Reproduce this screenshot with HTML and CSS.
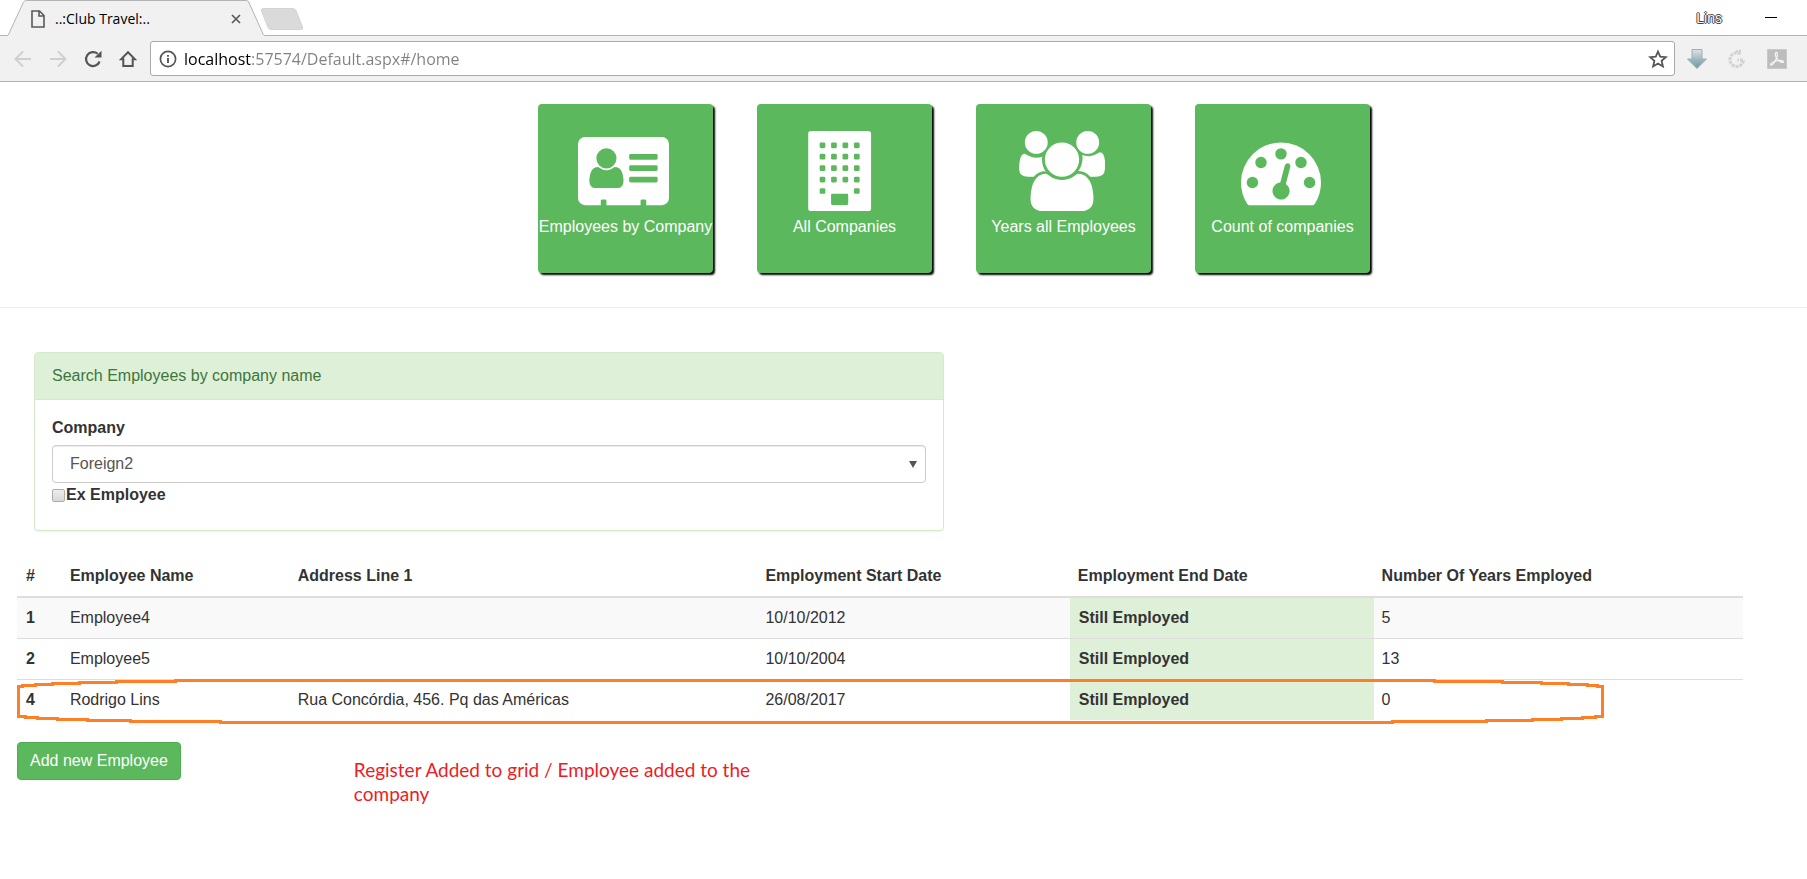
FILE: index.html
```html
<!DOCTYPE html>
<html lang="en">
<head>
<meta charset="utf-8">
<title>..:Club Travel:..</title>
<link rel="stylesheet" href="styles.css">
</head>
<body>
<header class="browser">
  <div class="tabstrip">
    <div class="tab">
      <svg class="tab-shape" viewBox="0 0 260 37" aria-hidden="true"><path class="tab-fill" d="M2 37V35.500L18 2Q18.500.500 20.500.500H240Q242 .500 243 2L258 35.500V37z"/><path class="tab-line" d="M0 35.500H1Q2 35.500 2.500 34.500L17.500 2Q18.500.500 20.500.500H240Q242 .500 242.700 2L257.300 34.500Q257.800 35.500 259 35.500H260"/></svg>
      <svg class="tab-page" viewBox="0 0 14 18" aria-hidden="true"><path d="M1 1H8.500L13 5.500V17H1zM8 1V6H13" fill="none" stroke="#5a5a5a" stroke-width="1.600"/></svg>
      <span class="tab-title">..:Club Travel:..</span>
      <button class="tab-close" aria-label="Close tab"><svg width="10" height="10" viewBox="0 0 10 10"><path d="M1 1L9 9M9 1L1 9" stroke="#5a5a5a" stroke-width="1.700"/></svg></button>
    </div>
    <button class="new-tab" aria-label="New tab"><svg width="44" height="22" viewBox="0 0 44 22"><path d="M3 .500H33Q35 .500 36 2.500L42.500 19Q43 21.500 41 21.500H11Q9 21.500 8 19.500L1.500 3Q1 .500 3 .500z" fill="#dadada" stroke="#d4d4d4"/></svg></button>
    <span class="user">Lins</span>
    <button class="minimise" aria-label="Minimise"><svg width="12" height="2" viewBox="0 0 12 2"><path d="M0 .500H12" stroke="#000"/></svg></button>
  </div>
  <div class="toolbar">
    <button aria-label="Back"><svg width="18" height="18" viewBox="0 0 18 18"><path d="M17 9H2M9 1.500L1.500 9L9 16.500" fill="none" stroke="#cfcfcf" stroke-width="1.900"/></svg></button>
    <button aria-label="Forward"><svg width="18" height="18" viewBox="0 0 18 18"><path d="M1 9H16M9 1.500L16.500 9L9 16.500" fill="none" stroke="#cfcfcf" stroke-width="1.900"/></svg></button>
    <button aria-label="Reload"><svg width="18" height="18" viewBox="0 0 18 18"><path d="M15.600 11.500A7 7 0 1 1 13.700 3.800" fill="none" stroke="#555" stroke-width="2.200"/><path d="M17.500 .800V7.500H10.500z" fill="#555"/></svg></button>
    <button aria-label="Home"><svg width="18" height="18" viewBox="0 0 18 18"><path d="M9 2.200L2 9.300H4.300V16H13.700V9.300H16z" fill="none" stroke="#555" stroke-width="2"/></svg></button>
    <div class="omnibox">
      <svg width="18" height="18" viewBox="0 0 18 18" aria-hidden="true"><circle cx="9" cy="9" r="7.600" fill="none" stroke="#555" stroke-width="1.700"/><path d="M9 8V13M9 5V6.800" stroke="#555" stroke-width="1.900"/></svg>
      <input class="url" type="text" aria-label="Address" value="localhost:57574/Default.aspx#/home">
      <button aria-label="Bookmark"><svg width="20" height="20" viewBox="0 0 20 20"><path d="M10 2.500L12.200 7.700L17.800 8.200L13.600 11.900L14.900 17.400L10 14.500L5.100 17.400L6.400 11.900L2.200 8.200L7.800 7.700z" fill="none" stroke="#555" stroke-width="1.800"/></svg></button>
    </div>
    <button class="ext" aria-label="Downloads"><svg width="20" height="20" viewBox="0 0 20 20"><defs><linearGradient id="dl" x2="0" y2="1"><stop offset="0" stop-color="#dfe3e5"/><stop offset=".6" stop-color="#93b2b9"/><stop offset="1" stop-color="#6f9ba4"/></linearGradient></defs><path d="M5 .500H15V10H19.500L10 19.500L.500 10H5z" fill="url(#dl)" stroke="#a1adb2"/></svg></button>
    <button class="ext" aria-label="Extension"><svg width="20" height="20" viewBox="0 0 20 20"><path d="M13.500 5A6.800 6.800 0 1 0 16.500 11H10.500" fill="none" stroke="#d2d2d2" stroke-width="3" stroke-dasharray="3 1"/><path d="M9 2.500L14 1.500" stroke="#cacaca" stroke-width="2" stroke-dasharray="2 1"/></svg></button>
    <button class="ext" aria-label="PDF"><svg width="20" height="20" viewBox="0 0 20 20"><path d="M.500.500H19.500V19.500H.500z" fill="#bdbdbd" stroke="#c9c9c9"/><path d="M9 3.500C11 3 10.500 7 9.300 9.500C7.500 13.500 5 16.500 3.700 16C2.800 14.500 7 12.200 10.500 11.600C14 11 16.800 11.800 16.500 13C15.500 14.300 11 12 9.500 9C8.300 6.500 8 4 9 3.500z" fill="none" stroke="#f4f4f4" stroke-width="1.300"/></svg></button>
  </div>
</header>

<nav class="cards">
  <a class="card" href="#by-company">
    <svg class="icon icon-card" viewBox="0 0 2048 1792" aria-hidden="true"><path fill-rule="evenodd" d="M160 128H1888q66 0 113 47t47 113V1504q0 66-47 113t-113 47H1536V1568q0-14-9-23t-23-9h-64q-14 0-23 9t-9 23v96H640V1568q0-14-9-23t-23-9h-64q-14 0-23 9t-9 23v96H160q-66 0-113-47T0 1504V288q0-66 47-113t113-47zM1024 1131q0-64-9-117.500t-29.500-103-60.500-78-97-28.500q-6 4-30 18t-37.500 21.500-35.500 17.500-43 14.500-42 4.500-42-4.500-43-14.500-35.500-17.500-37.500-21.500-30-18q-57 0-97 28.500t-60.500 78-29.500 103-9 117.500 37 106.500 91 42.500h512q54 0 91-42.500t37-106.500zM867 611q0-94-66.500-160.500t-160.500-66.500-160.500 66.500-66.500 160.500 66.500 160.500 160.500 66.500 160.500-66.500 66.500-160.500zM1184 512h576q32 0 32 32v64q0 32-32 32h-576q-32 0-32-32v-64q0-32 32-32zM1184 768h576q32 0 32 32v64q0 32-32 32h-576q-32 0-32-32v-64q0-32 32-32zM1184 1024h576q32 0 32 32v64q0 32-32 32h-576q-32 0-32-32v-64q0-32 32-32z"/></svg>
    <span>Employees by Company</span>
  </a>
  <a class="card" href="#companies">
    <svg class="icon icon-building" viewBox="0 0 1536 1792" aria-hidden="true"><rect width="1408" height="1792" rx="64"/><g class="cut"><rect x="256" y="256" width="128" height="128" rx="30"/><rect x="512" y="256" width="128" height="128" rx="30"/><rect x="768" y="256" width="128" height="128" rx="30"/><rect x="1024" y="256" width="128" height="128" rx="30"/><rect x="256" y="512" width="128" height="128" rx="30"/><rect x="512" y="512" width="128" height="128" rx="30"/><rect x="768" y="512" width="128" height="128" rx="30"/><rect x="1024" y="512" width="128" height="128" rx="30"/><rect x="256" y="768" width="128" height="128" rx="30"/><rect x="512" y="768" width="128" height="128" rx="30"/><rect x="768" y="768" width="128" height="128" rx="30"/><rect x="1024" y="768" width="128" height="128" rx="30"/><rect x="256" y="1024" width="128" height="128" rx="30"/><rect x="512" y="1024" width="128" height="128" rx="30"/><rect x="768" y="1024" width="128" height="128" rx="30"/><rect x="1024" y="1024" width="128" height="128" rx="30"/><rect x="256" y="1280" width="128" height="128" rx="30"/><rect x="1024" y="1280" width="128" height="128" rx="30"/><rect x="512" y="1408" width="384" height="248" rx="24"/></g></svg>
    <span>All Companies</span>
  </a>
  <a class="card" href="#years">
    <svg class="icon icon-users" viewBox="0 0 1920 1792" aria-hidden="true"><path d="M593 896q-162 5-265 128h-134q-82 0-138-40.500t-56-118.500q0-353 124-353 6 0 43.500 21t97.500 42.500 119 21.500q67 0 133-23-5 37-5 66 0 159 93 290zm1071 637q0 120-73 189.500t-194 69.500h-874q-121 0-194-69.500t-73-189.500q0-53 3.500-103.500t14-109 26.500-108.500 43-97.500 62-81 85.500-53.500 111.500-20q10 0 43 21.500t73 48 107 48 135 21.500 135-21.500 107-48 73-48 43-21.500q61 0 111.500 20t85.500 53.500 62 81 43 97.500 26.500 108.500 14 109 3.500 103.500zm-1024-1277q0 106-75 181t-181 75-181-75-75-181 75-181 181-75 181 75 75 181zm704 384q0 159-112.500 271.500t-271.500 112.500-271.500-112.500-112.500-271.500 112.500-271.500 271.500-112.500 271.500 112.500 112.500 271.500zm576 225q0 78-56 118.500t-138 40.500h-134q-103-123-265-128 93-131 93-290 0-29-5-66 66 23 133 23 59 0 119-21.500t97.500-42.500 43.500-21q124 0 124 353zm-128-609q0 106-75 181t-181 75-181-75-75-181 75-181 181-75 181 75 75 181z"/></svg>
    <span>Years all Employees</span>
  </a>
  <a class="card" href="#count">
    <svg class="icon icon-gauge" viewBox="0 0 1792 1792" aria-hidden="true"><path d="M1792 1152q0 261-141 483-19 29-54 29h-1402q-35 0-54-29-141-221-141-483 0-182 71-348t191-286 286-191 348-71 348 71 286 191 191 286 71 348z"/><g class="cut"><circle cx="256" cy="1152" r="128"/><circle cx="448" cy="704" r="128"/><circle cx="896" cy="512" r="128"/><circle cx="1344" cy="704" r="128"/><circle cx="1536" cy="1152" r="128"/><path d="M1004 1185l101-382q6-26-7.500-48.500t-38.500-29.500-48 6.500-30 39.500l-101 382q-60 5-107 43.500t-63 98.500q-20 77 20 146t117 89 146-20 89-117q16-60-6-117t-72-91z"/></g></svg>
    <span>Count of companies</span>
  </a>
</nav>

<main class="content">
  <section class="panel">
    <h2 class="panel-heading">Search Employees by company name</h2>
    <div class="panel-body">
      <label class="field-label" for="company">Company</label>
      <div class="select-wrap">
        <select id="company"><option>Foreign2</option></select>
      </div>
      <div class="check"><input type="checkbox" id="ex"><label for="ex">Ex Employee</label></div>
    </div>
  </section>

  <div class="grid-wrap">
    <table class="grid">
      <colgroup><col class="c-id"><col class="c-name"><col class="c-address"><col class="c-start"><col class="c-end"><col class="c-years"></colgroup>
      <thead>
        <tr><th>#</th><th>Employee Name</th><th>Address Line 1</th><th>Employment Start Date</th><th>Employment End Date</th><th>Number Of Years Employed</th></tr>
      </thead>
      <tbody>
        <tr><th>1</th><td>Employee4</td><td></td><td>10/10/2012</td><td class="status">Still Employed</td><td>5</td></tr>
        <tr><th>2</th><td>Employee5</td><td></td><td>10/10/2004</td><td class="status">Still Employed</td><td>13</td></tr>
        <tr><th>4</th><td>Rodrigo Lins</td><td>Rua Concórdia, 456. Pq das Américas</td><td>26/08/2017</td><td class="status">Still Employed</td><td>0</td></tr>
      </tbody>
    </table>
    <svg class="highlight" viewBox="0 0 1588 45" preserveAspectRatio="none" aria-hidden="true"><path d="M2.500 7.500H7V6.500H20V5.500H37V4.500H64V3.500H101V2.500H160V1.500H1419V2.500H1487V3.500H1526V4.500H1553V5.500H1572V6.500H1582V7.500H1586.500V37.500H1580V38.500H1567V39.500H1546V40.500H1517V41.500H1471V42.500H1377V43.500H205V42.500H115V41.500H72V40.500H42V39.500H22V38.500H10V37.500H2.500z"/></svg>
  </div>

  <div class="actions">
    <button class="btn">Add new Employee</button>
    <p class="note">Register Added to grid / Employee added to the company</p>
  </div>
</main>
</body>
</html>
```
FILE: styles.css
```css
* { box-sizing: border-box; }

body {
  margin: 0;
  background: #fff;
  color: #333;
  font-family: "Liberation Sans", Arial, sans-serif;
  font-size: 16px;
  line-height: 24px;
}

svg { display: block; flex: none; }

button {
  padding: 0;
  border: 0;
  background: none;
  font: inherit;
  cursor: pointer;
}

/* Browser frame */
.browser { font-family: "Open Sans", "Noto Sans", sans-serif; }

.tabstrip {
  display: flex;
  align-items: center;
  height: 36px;
  padding: 0 30px 0 6px;
  border-bottom: 1px solid #b3b3b3;
}

.tab {
  position: relative;
  display: flex;
  align-items: center;
  width: 260px;
  height: 36px;
  padding: 2px 20px 0 25px;
}

.tab-shape {
  position: absolute;
  left: 0;
  top: 0;
  width: 260px;
  height: 37px;
}
.tab-fill { fill: #f1f1f1; }
.tab-line { fill: none; stroke: #b3b3b3; }

.tab-page { position: relative; width: 14px; height: 18px; }

.tab-title {
  position: relative;
  flex: 1;
  margin-left: 10px;
  color: #000;
  font-size: 14px;
  line-height: 20px;
}

.tab-close { position: relative; margin-right: 5px; }
.new-tab { margin: 3px auto 0 -6px; }

.user {
  margin-right: 43px;
  color: #fff;
  font-family: "Liberation Sans", Arial, sans-serif;
  font-size: 14px;
  line-height: 18px;
  text-shadow: 1px 0 0 #444, -1px 0 0 #444, 0 1px 0 #444, 0 -1px 0 #444;
}

.toolbar {
  display: flex;
  align-items: center;
  gap: 17px;
  height: 46px;
  padding: 0 20px 0 14px;
  background: #f1f1f1;
  border-bottom: 1px solid #b3b3b3;
}

.omnibox {
  display: flex;
  flex: 1;
  align-items: center;
  height: 35px;
  margin: 0 -5px 0 -4px;
  padding: 0 6px 0 8px;
  background: #fff;
  border: 1px solid #a9a9a9;
  border-radius: 3px;
}

.url {
  flex: 1;
  min-width: 0;
  margin-left: 7px;
  padding: 0;
  border: 0;
  outline: 0;
  color: #000;
  background: linear-gradient(90deg, #000 67px, #808080 67px);
  background-clip: text;
  -webkit-background-clip: text;
  -webkit-text-fill-color: transparent;
  font-family: inherit;
  font-size: 16px;
  line-height: 24px;
}

.ext + .ext { margin-left: 3px; }

/* Navigation cards */
.cards {
  display: flex;
  flex-wrap: wrap;
  justify-content: center;
  gap: 44px;
  padding: 22px 0 34px 101px;
  border-bottom: 1px solid #eee;
}

.card {
  display: flex;
  flex-direction: column;
  align-items: center;
  width: 175px;
  height: 169px;
  padding-top: 27px;
  border-radius: 4px;
  background: #5cb85c;
  box-shadow: 2px 2px 2px #000;
  color: #fff;
  text-decoration: none;
  white-space: nowrap;
}

.card span { margin-top: 4px; }

.icon { height: 80px; margin-right: 4px; fill: #fff; }
.icon .cut { fill: #5cb85c; }
.icon-card { width: 91px; }
.icon-building { width: 69px; }
.icon-users { width: 86px; }
.icon-gauge { width: 80px; }

/* Search panel */
.content { padding: 44px 64px 40px 17px; }

.panel {
  width: 52.7%;
  margin: 0 0 25px 17px;
  border: 1px solid #d6e9c6;
  border-radius: 4px;
  box-shadow: 0 1px 1px rgba(0, 0, 0, .05);
}

.panel-heading {
  margin: 0;
  padding: 11px 17px;
  border-bottom: 1px solid #d6e9c6;
  border-radius: 3px 3px 0 0;
  background: #dff0d8;
  color: #3c763d;
  font-size: 16px;
  font-weight: 400;
}

.panel-body { padding: 16px 17px 23px; }

.field-label {
  display: block;
  margin-bottom: 5px;
  font-weight: 700;
}

.select-wrap { position: relative; }

.select-wrap::after {
  content: "";
  position: absolute;
  right: 9px;
  top: 16px;
  border: 4px solid transparent;
  border-top: 7px solid #555;
  border-bottom: 0;
  pointer-events: none;
}

.select-wrap select {
  display: block;
  width: 100%;
  height: 38px;
  padding: 0 17px;
  border: 1px solid #ccc;
  border-radius: 4px;
  box-shadow: inset 0 1px 1px rgba(0, 0, 0, .075);
  background: #fff;
  color: #555;
  font: inherit;
  appearance: none;
}

.check {
  display: flex;
  align-items: center;
  gap: 1px;
  font-weight: 700;
}

.check input {
  appearance: none;
  width: 13px;
  height: 13px;
  margin: 0;
  border: 1px solid #acacac;
  border-radius: 2px;
  background: linear-gradient(#eee, #d8d8d8);
}

/* Employee grid */
.grid-wrap { position: relative; }

.grid {
  width: 100%;
  table-layout: fixed;
  border-collapse: separate;
  border-spacing: 0;
}

.grid th, .grid td {
  height: 41px;
  padding: 8px;
  text-align: left;
}

.grid thead th { border-bottom: 2px solid #ddd; }
.grid tbody tr + tr > * { border-top: 1px solid #ddd; }
.grid tbody tr:first-child > * { height: 40px; }
.grid tbody tr:nth-child(odd) > * { background: #f9f9f9; }
.grid tbody tr:last-child > * { background: #fff; }
.grid tr > :first-child { padding-left: 9px; }
.grid tbody tr > .status { padding-left: 9px; background: #dff0d8; font-weight: 700; }

.c-id { width: 2.6%; }
.c-name { width: 13.2%; }
.c-address { width: 27.1%; }
.c-start { width: 18.1%; }
.c-end { width: 17.6%; }
.c-years { width: 21.4%; }

/* Pen mark around the newest row */
.highlight {
  position: absolute;
  left: -1px;
  bottom: -4px;
  width: 92%;
  height: 45px;
  overflow: visible;
  pointer-events: none;
}
.highlight path {
  fill: none;
  stroke: #ff7f27;
  stroke-width: 3px;
  shape-rendering: crispEdges;
}

/* Actions */
.actions {
  display: flex;
  align-items: flex-start;
  margin-top: 22px;
}

.btn {
  height: 38px;
  padding: 0 12px;
  border: 1px solid #4cae4c;
  border-radius: 4px;
  background: #5cb85c;
  color: #fff;
}

.note {
  max-width: 420px;
  margin: 16px 0 0 173px;
  color: #ed1c24;
  font-family: Lato, sans-serif;
  font-size: 19px;
}
```
